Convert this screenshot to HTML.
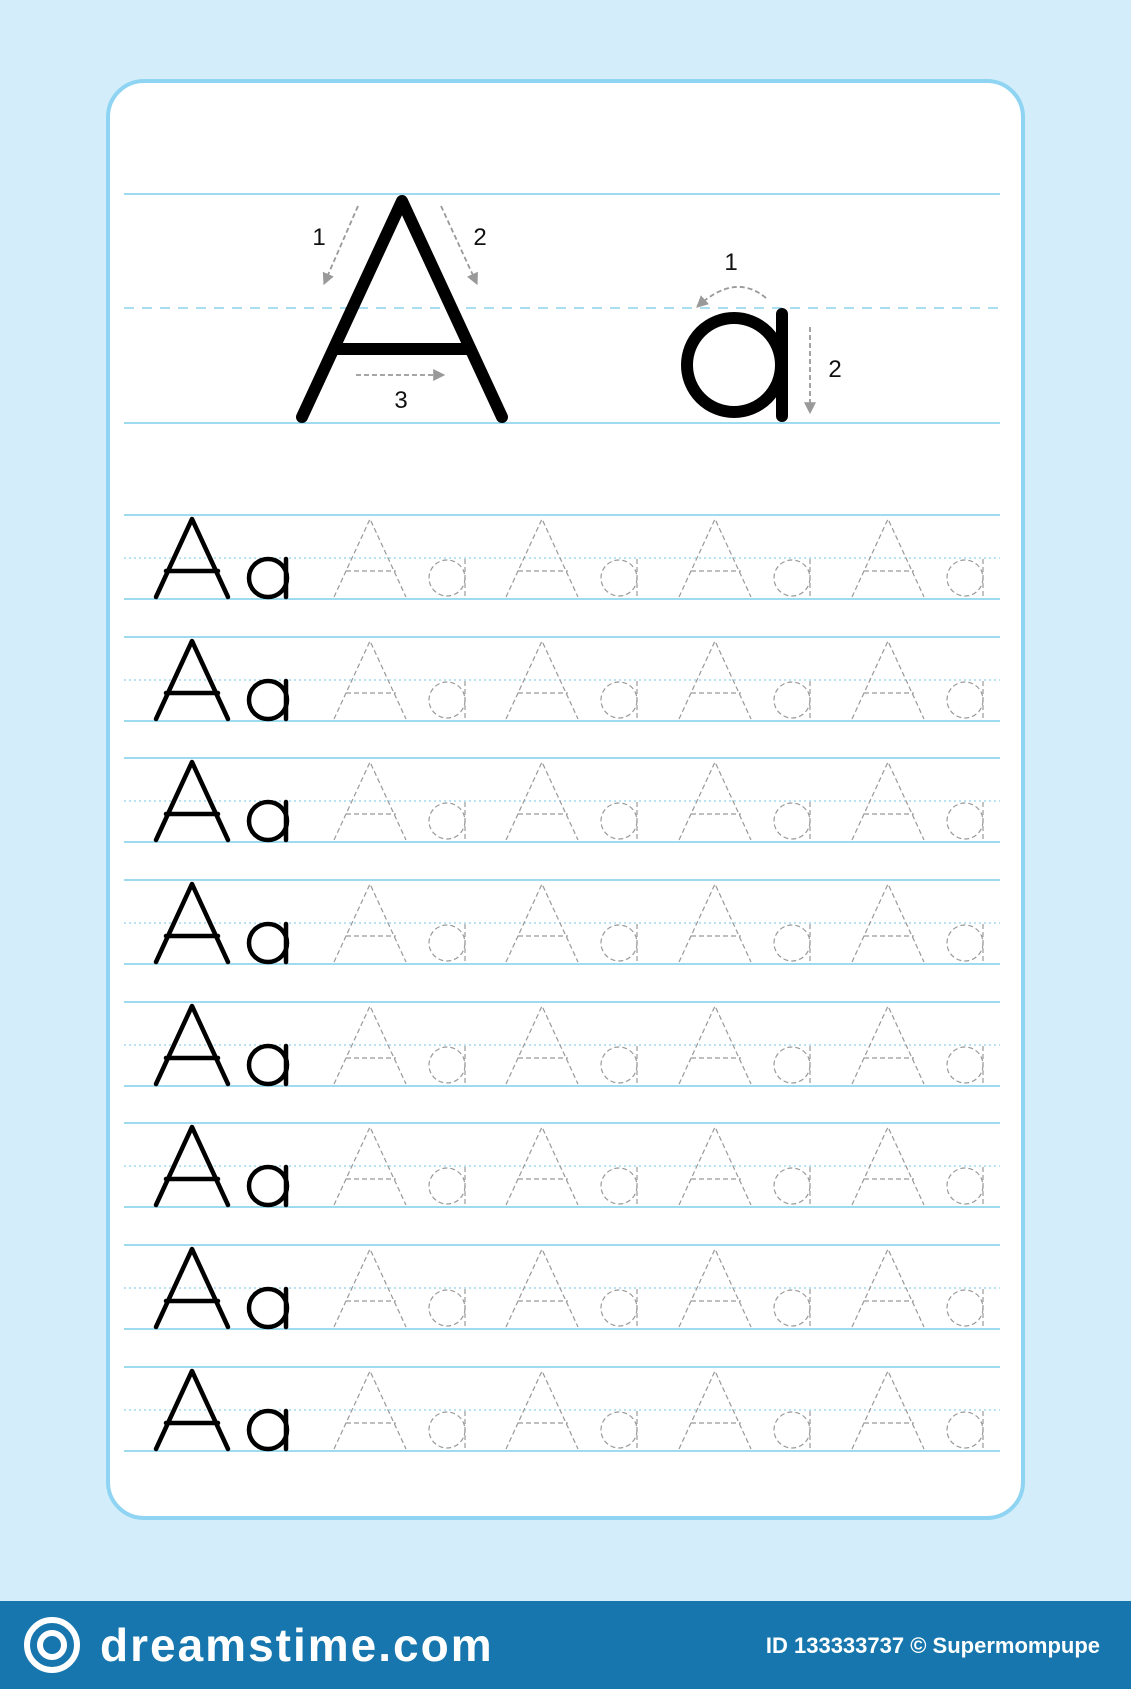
<!DOCTYPE html>
<html><head><meta charset="utf-8"><style>
html,body{margin:0;padding:0;}
body{width:1131px;height:1689px;background:#d3eefa;position:relative;overflow:hidden;font-family:"Liberation Sans",sans-serif;}
svg{position:absolute;left:0;top:0;}
</style></head><body>
<svg width="1131" height="1689" viewBox="0 0 1131 1689" xmlns="http://www.w3.org/2000/svg">
<defs>
<marker id="ar2" viewBox="0 0 10 10" markerWidth="12" markerHeight="12" refX="9" refY="5" orient="auto" markerUnits="userSpaceOnUse"><path d="M0,0 L10,5 L0,10Z" fill="#999"/></marker>
<g id="row">
  <line x1="124" y1="0" x2="1000" y2="0" stroke="#7fcfea" stroke-width="1.5"/>
  <line x1="124" y1="43" x2="1000" y2="43" stroke="#8fd2ec" stroke-width="1.2" stroke-dasharray="2,3"/>
  <line x1="124" y1="84" x2="1000" y2="84" stroke="#7fcfea" stroke-width="1.5"/>
  <g fill="none" stroke="#000" stroke-width="4.5" stroke-linecap="round" stroke-linejoin="round">
    <path d="M156,82 L192,4 L228,82 M166,56 L218,56"/>
    <circle cx="268" cy="63" r="19"/>
    <line x1="286" y1="44" x2="286" y2="82"/>
  </g>
  <g fill="none" stroke="#999" stroke-width="1.2" stroke-dasharray="5,3">
    <g id="tr"><path d="M334,82 L370,4 L406,82 M346,56 L396,56"/>
    <circle cx="447" cy="63" r="18"/>
    <line x1="465" y1="44" x2="465" y2="82"/></g>
    <use href="#tr" x="172"/>
    <use href="#tr" x="345"/>
    <use href="#tr" x="518"/>
  </g>
</g>
</defs>
<rect x="108" y="81" width="915" height="1437" rx="36" fill="#fff" stroke="#8fd4f2" stroke-width="4"/>
<line x1="124" y1="194" x2="1000" y2="194" stroke="#7fcfea" stroke-width="1.5"/>
<line x1="124" y1="308" x2="1000" y2="308" stroke="#8fd2ec" stroke-width="1.5" stroke-dasharray="10,8"/>
<line x1="124" y1="423" x2="1000" y2="423" stroke="#7fcfea" stroke-width="1.5"/>
<g fill="none" stroke="#000" stroke-width="12" stroke-linecap="round" stroke-linejoin="round">
  <path d="M302,417 L402,201 L502,417 M336,349 L468,349"/>
  <circle cx="734" cy="365" r="47"/>
  <line x1="782" y1="314" x2="782" y2="416"/>
</g>
<g fill="none" stroke="#999" stroke-width="1.8" stroke-dasharray="5,3">
  <line x1="358" y1="206" x2="324" y2="284" marker-end="url(#ar2)"/>
  <line x1="441" y1="206" x2="477" y2="284" marker-end="url(#ar2)"/>
  <line x1="356" y1="375" x2="444" y2="375" marker-end="url(#ar2)"/>
  <path d="M766,298 Q735,272 697,307" marker-end="url(#ar2)"/>
  <line x1="810" y1="327" x2="810" y2="413" marker-end="url(#ar2)"/>
</g>
<g font-size="24" fill="#111" text-anchor="middle">
  <text x="319" y="245">1</text>
  <text x="480" y="245">2</text>
  <text x="401" y="408">3</text>
  <text x="731" y="270">1</text>
  <text x="835" y="377">2</text>
</g>
<use href="#row" y="515"/>
<use href="#row" y="637"/>
<use href="#row" y="758"/>
<use href="#row" y="880"/>
<use href="#row" y="1002"/>
<use href="#row" y="1123"/>
<use href="#row" y="1245"/>
<use href="#row" y="1367"/>
<rect x="0" y="1601" width="1131" height="88" fill="#1676ad"/>
<g fill="none" stroke="#fff" stroke-width="6">
  <circle cx="52" cy="1645" r="25"/>
  <circle cx="52" cy="1645" r="12"/>
</g>
<text x="100" y="1661" fill="#fff" font-size="46" font-weight="bold" letter-spacing="2" font-family="Liberation Sans, sans-serif">dreamstime.com</text>
<text x="1100" y="1653" fill="#fff" font-size="22" font-weight="bold" text-anchor="end" font-family="Liberation Sans, sans-serif">ID 133333737 © Supermompupe</text>
</svg>
</body></html>
